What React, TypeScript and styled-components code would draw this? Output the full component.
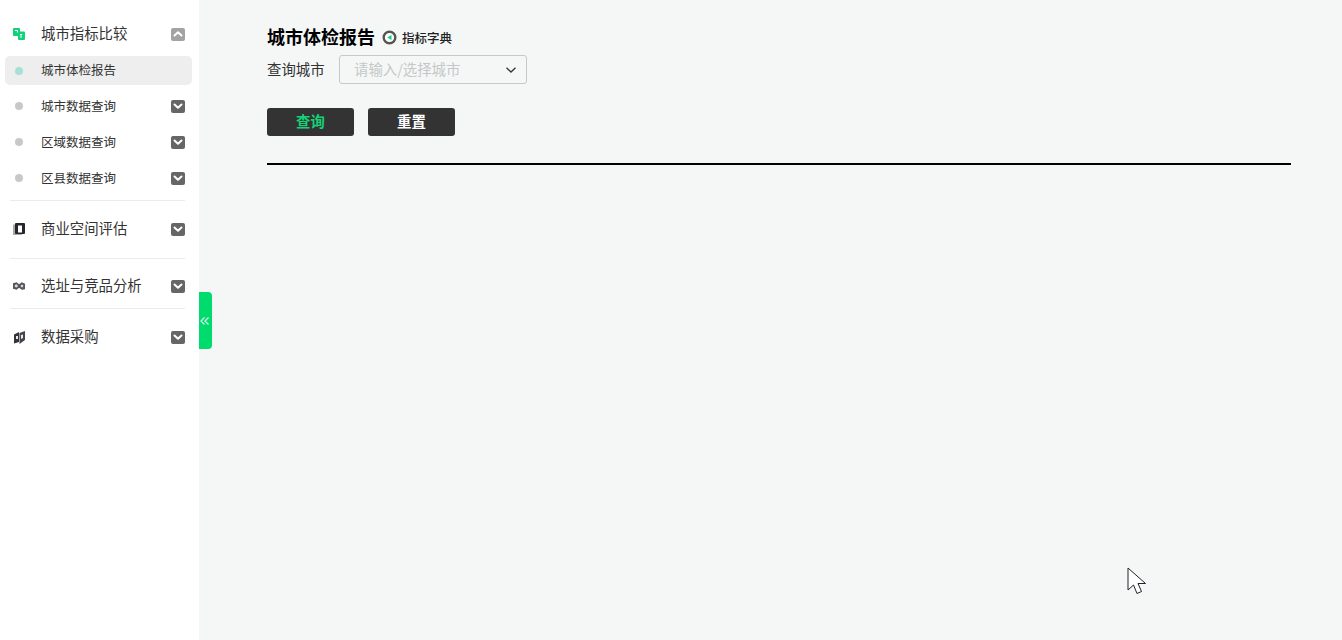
import React, { FC } from "react";
import styled, { createGlobalStyle } from "styled-components";

const GlobalStyle = createGlobalStyle`
  html, body {
    margin: 0;
    padding: 0;
    height: 100%;
  }
  body {
    font-family: "Noto Sans CJK SC", "Noto Sans", sans-serif;
    background: #f5f7f7;
    overflow: hidden;
  }
`;

const subItems = ["城市数据查询", "区域数据查询", "区县数据查询"];

const Chevron: FC<{ up?: boolean }> = ({ up }) => (
  <ChevronBox $up={up}>
    <svg width="14" height="14" viewBox="0 0 14 14" fill="none">
      <path
        d={up ? "M3.5 8.5 7 5.2l3.5 3.3" : "M3.5 5.5 7 8.8l3.5-3.3"}
        stroke="#fff"
        strokeWidth="2"
        strokeLinecap="round"
        strokeLinejoin="round"
      />
    </svg>
  </ChevronBox>
);

const CompareIcon = () => (
  <svg width="12" height="12" viewBox="0 0 12 12">
    <rect x="0" y="0" width="7" height="8" rx="1" fill="#0fd27a" />
    <rect x="5" y="3.500" width="7" height="8.500" rx="1" fill="#0fd27a" />
    <path d="M2 2.500h2.500v2M7 6.500h2.200M8 6.500v3.500" stroke="#fff" strokeWidth="1" fill="none" />
  </svg>
);

const SpaceIcon = () => (
  <svg width="12" height="12" viewBox="0 0 12 12">
    <rect x="0" y="1.500" width="9" height="10.500" fill="#a8a8a8" />
    <rect x="2" y="0" width="10" height="11" rx="1" fill="#26262c" />
    <rect x="5" y="2.500" width="4" height="7" fill="#fff" />
  </svg>
);

const SiteIcon = () => (
  <svg width="12" height="8" viewBox="0 0 13 8">
    <path d="M0 1 4 0l2.500 2L9.500 0 13 1.500v6L9.500 8 6.500 6 4 8 0 7z" fill="#55555c" />
    <path d="M2 3l2-.800L5.500 4 4 5.500 2 5zM8 4l1.500-1.500 1.500.500v2l-1.500.500z" fill="#d8d8d8" />
  </svg>
);

const PurchaseIcon = () => (
  <svg width="11" height="13" viewBox="0 0 11 13">
    <path d="M0 3.500 5 1v10l-5 1.500z" fill="#33333a" />
    <path d="M5.500 2 11 0v9l-5.500 4z" fill="#44444c" />
    <path d="M2 5h2v3H2zM7 4l2-.5v3.500L7 8z" fill="#e8e8e8" />
  </svg>
);

const DictIcon = () => (
  <svg width="15" height="15" viewBox="0 0 15 15">
    <circle cx="7.500" cy="7.500" r="5.800" fill="#fff" stroke="#555" strokeWidth="2.400" />
    <path d="M5.200 7.500 9.500 5v5z" fill="#0fd27a" />
  </svg>
);

const App: FC = () => {
  return (
    <Page>
      <GlobalStyle />
      <Sidebar>
        <GroupRow>
          <IconSlot><CompareIcon /></IconSlot>
          <GroupLabel>城市指标比较</GroupLabel>
          <Chevron up />
        </GroupRow>
        <SubRow $active>
          <Dot $active />
          <SubLabel>城市体检报告</SubLabel>
        </SubRow>
        {subItems.map((name) => (
          <SubRow key={name}>
            <Dot />
            <SubLabel>{name}</SubLabel>
            <Chevron />
          </SubRow>
        ))}
        <Divider $top={4} $bottom={10} />
        <GroupRow>
          <IconSlot><SpaceIcon /></IconSlot>
          <GroupLabel>商业空间评估</GroupLabel>
          <Chevron />
        </GroupRow>
        <Divider $top={11} $bottom={9} />
        <GroupRow>
          <IconSlot><SiteIcon /></IconSlot>
          <GroupLabel>选址与竞品分析</GroupLabel>
          <Chevron />
        </GroupRow>
        <Divider $top={4} $bottom={10} />
        <GroupRow>
          <IconSlot><PurchaseIcon /></IconSlot>
          <GroupLabel>数据采购</GroupLabel>
          <Chevron />
        </GroupRow>
        <CollapseTab>
          <svg width="10" height="10" viewBox="0 0 10 10" fill="none">
            <path
              d="M4.500 1.500 1 5l3.500 3.500M8.500 1.500 5 5l3.500 3.500"
              stroke="#d8f5ea"
              strokeWidth="1.200"
            />
          </svg>
        </CollapseTab>
      </Sidebar>
      <Content>
        <TitleRow>
          <Title>城市体检报告</Title>
          <DictLink>
            <DictIcon />
            <span>指标字典</span>
          </DictLink>
        </TitleRow>
        <FilterRow>
          <FilterLabel>查询城市</FilterLabel>
          <CitySelect>
            <Placeholder>请输入/选择城市</Placeholder>
            <svg width="12" height="12" viewBox="0 0 12 12" fill="none">
              <path d="M1.500 3.800 6 8l4.500-4.200" stroke="#333" strokeWidth="1.300" />
            </svg>
          </CitySelect>
        </FilterRow>
        <ButtonRow>
          <ActionButton $primary>查询</ActionButton>
          <ActionButton>重置</ActionButton>
        </ButtonRow>
        <Rule />
      </Content>
      <Cursor>
        <svg width="20" height="30" viewBox="0 0 20 30">
          <path
            d="M1 1v22l5.500-5 3.500 8.500 4.500-2-3.500-8H18.500z"
            fill="#fff"
            stroke="#22222a"
            strokeWidth="1"
          />
        </svg>
      </Cursor>
    </Page>
  );
};

const Page = styled.div`
  display: flex;
  height: 640px;
  width: 1342px;
  position: relative;
  overflow: hidden;
`;

const Sidebar = styled.aside`
  position: relative;
  box-sizing: border-box;
  flex: 0 0 199px;
  padding-top: 16px;
  background: #fff;
`;

const GroupRow = styled.div`
  display: flex;
  align-items: center;
  height: 36px;
  padding: 0 14px 0 13px;
`;

const IconSlot = styled.span`
  display: flex;
  align-items: center;
  justify-content: center;
  flex: 0 0 12px;
  margin-right: 16px;
`;

const GroupLabel = styled.span`
  flex: 1;
  padding-bottom: 3px;
  font-size: 14.400px;
  color: #333;
`;

const SubRow = styled.div<{ $active?: boolean }>`
  display: flex;
  align-items: center;
  box-sizing: border-box;
  height: ${(p) => (p.$active ? "29px" : "36px")};
  margin: ${(p) => (p.$active ? "4px 7px 3px 5px" : "0")};
  padding: ${(p) => (p.$active ? "0 7px 0 10px" : "0 14px 0 15px")};
  border-radius: 5px;
  background: ${(p) => (p.$active ? "#eeeeee" : "transparent")};
`;

const Dot = styled.span<{ $active?: boolean }>`
  flex: 0 0 8px;
  height: 8px;
  margin-right: 18px;
  border-radius: 50%;
  background: ${(p) => (p.$active ? "#a6e0d6" : "#c8c8c8")};
`;

const SubLabel = styled.span`
  flex: 1;
  padding-bottom: 2px;
  font-size: 12.500px;
  color: #333;
`;

const ChevronBox = styled.span<{ $up?: boolean }>`
  display: flex;
  align-items: center;
  justify-content: center;
  flex: 0 0 14px;
  height: 13px;
  border-radius: 2px;
  background: ${(p) => (p.$up ? "#a3a3a3" : "#666666")};
`;

const Divider = styled.div<{ $top: number; $bottom: number }>`
  height: 1px;
  margin: ${(p) => p.$top}px 14px ${(p) => p.$bottom}px 10px;
  background: #ebebeb;
`;

const CollapseTab = styled.button`
  position: absolute;
  top: 292px;
  left: 199px;
  display: flex;
  align-items: center;
  justify-content: center;
  width: 13px;
  height: 57px;
  padding: 0 2px 0 0;
  border: 0;
  border-radius: 0 4px 4px 0;
  background: #00db6e;
`;

const Content = styled.main`
  flex: 1;
  box-sizing: border-box;
  padding: 24px 51px 0 68px;
`;

const TitleRow = styled.div`
  display: flex;
  align-items: center;
  height: 26px;
`;

const Title = styled.h1`
  margin: 0 7px 0 0;
  padding-bottom: 2px;
  font-size: 18px;
  font-weight: 700;
  color: #000;
`;

const DictLink = styled.span`
  display: flex;
  align-items: center;
  gap: 5px;
  font-size: 12.500px;
  font-weight: 500;
  color: #222;
`;

const FilterRow = styled.div`
  display: flex;
  align-items: center;
  margin-top: 5px;
`;

const FilterLabel = styled.label`
  width: 72px;
  padding-bottom: 2px;
  font-size: 14.400px;
  color: #333;
`;

const CitySelect = styled.div`
  display: flex;
  align-items: center;
  justify-content: space-between;
  box-sizing: border-box;
  width: 188px;
  height: 29px;
  padding: 0 9px 0 14px;
  border: 1px solid #c8c8c8;
  border-radius: 3px;
`;

const Placeholder = styled.span`
  padding-bottom: 2px;
  font-size: 14.400px;
  color: #c4c8c8;
`;

const ButtonRow = styled.div`
  display: flex;
  gap: 14px;
  margin-top: 24px;
`;

const ActionButton = styled.button<{ $primary?: boolean }>`
  width: 87px;
  height: 28px;
  padding: 0 0 3px;
  border: 0;
  border-radius: 3px;
  background: #333333;
  font-family: inherit;
  font-size: 14.400px;
  font-weight: 700;
  color: ${(p) => (p.$primary ? "#14d278" : "#ffffff")};
`;

const Rule = styled.hr`
  height: 2px;
  margin: 27px 0 0;
  border: 0;
  background: #000;
`;

const Cursor = styled.div`
  position: absolute;
  left: 1127px;
  top: 567px;
  line-height: 0;
`;

export default App;
